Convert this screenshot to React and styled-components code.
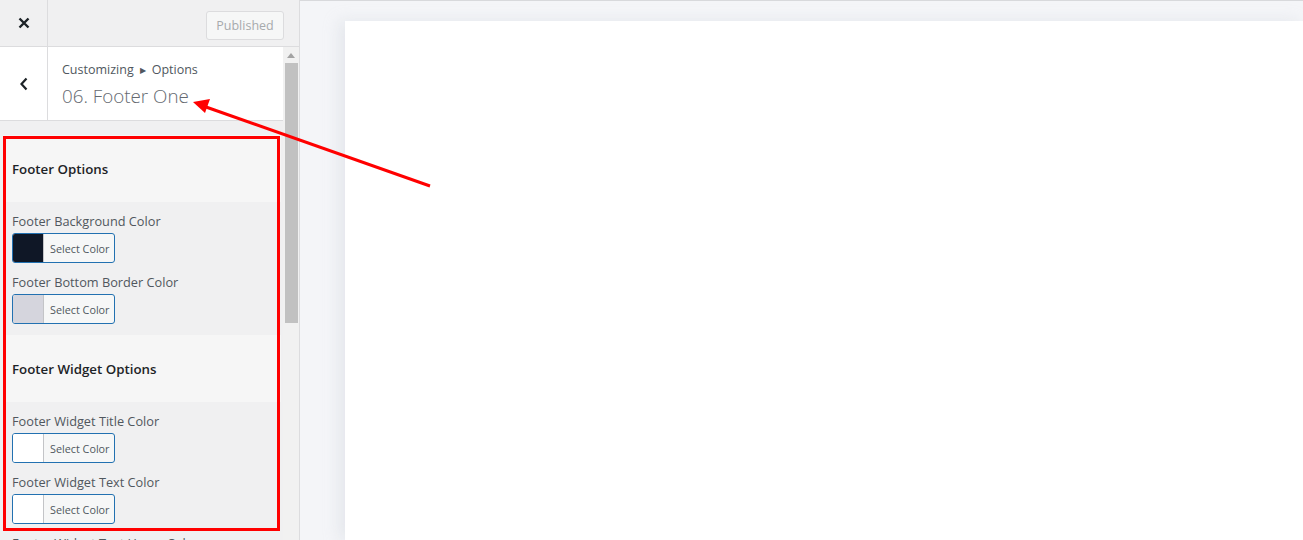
import React from "react";
import styled, { createGlobalStyle } from "styled-components";

const GlobalStyle = createGlobalStyle`
  html, body { margin: 0; padding: 0; overflow: hidden; }
  body { font-family: "Open Sans", "Noto Sans", sans-serif; color: #1d2327; }
  * { box-sizing: border-box; }
`;

const Page = styled.div`
  position: relative;
  display: flex;
  width: 1303px;
  height: 540px;
  overflow: hidden;
`;

const Sidebar = styled.aside`
  width: 300px;
  flex: none;
  display: flex;
  flex-direction: column;
  background: #f0f0f1;
  border-right: 1px solid #dcdcde;
`;

const TopBar = styled.div`
  height: 47px;
  flex: none;
  display: flex;
  align-items: center;
  border-bottom: 1px solid #dcdcde;
`;

const IconButton = styled.div`
  width: 48px;
  height: 100%;
  flex: none;
  display: flex;
  align-items: center;
  justify-content: center;
  border-right: 1px solid #dcdcde;
  color: #1d2327;
`;

const PublishedButton = styled.div`
  margin-left: auto;
  margin-right: 15px;
  margin-top: 4px;
  width: 78px;
  height: 29px;
  display: flex;
  align-items: center;
  justify-content: center;
  font-size: 12.5px;
  color: #a7aaad;
  background: #f6f7f7;
  border: 1px solid #dcdcde;
  border-radius: 3px;
`;

const Body = styled.div`
  flex: 1;
  display: flex;
  min-height: 0;
`;

const Content = styled.div`
  flex: 1;
  min-width: 0;
  overflow: hidden;
`;

const SectionHead = styled.div`
  height: 74px;
  display: flex;
  background: #fff;
  border-bottom: 1px solid #dcdcde;
`;

const Titles = styled.div`
  padding: 14px 0 0 14px;
  display: flex;
  flex-direction: column;
`;

const Crumb = styled.div`
  font-size: 12.5px;
  line-height: 18px;
  color: #50575e;
  display: flex;
  align-items: center;
  gap: 6px;
`;

const Caret = styled.span`
  font-size: 8px;
  color: #50575e;
`;

const SectionTitle = styled.div`
  margin-top: 5px;
  font-size: 18.8px;
  font-weight: 300;
  line-height: 24px;
  color: #646970;
`;

const List = styled.div`
  padding-top: 14px;
`;

const GroupHeader = styled.div`
  height: 67px;
  margin: 0 2px 0 3px;
  padding-left: 9px;
  display: flex;
  align-items: center;
  background: #f6f6f6;
  font-size: 13.3px;
  font-weight: 600;
  color: #1d2327;
`;

const Controls = styled.div`
  padding: 10px 12px 11px;
  display: flex;
  flex-direction: column;
  gap: 10px;
`;

const Control = styled.div`
  display: flex;
  flex-direction: column;
  gap: 2px;
`;

const Label = styled.div`
  font-size: 12.75px;
  line-height: 19px;
  font-weight: 500;
  color: #50575e;
`;

const ColorButton = styled.div`
  width: 103px;
  height: 30px;
  display: flex;
  border: 1px solid #2271b1;
  border-radius: 3px;
  overflow: hidden;
  background: #f6f7f7;
`;

const Swatch = styled.div`
  width: 31px;
  flex: none;
  background: ${(p) => p.$color};
  border-right: 1px solid #c3c4c7;
`;

const ColorText = styled.div`
  flex: 1;
  display: flex;
  align-items: center;
  padding-left: 6px;
  font-size: 10.8px;
  color: #50575e;
`;

const Scrollbar = styled.div`
  width: 16px;
  flex: none;
  display: flex;
  flex-direction: column;
  align-items: center;
  background: #f1f1f1;
`;

const ScrollArrow = styled.div`
  height: 16px;
  flex: none;
  display: flex;
  align-items: center;
  justify-content: center;
`;

const ScrollThumb = styled.div`
  width: 13px;
  height: 260px;
  background: #c1c1c1;
`;

const Preview = styled.main`
  flex: 1;
  background: #f4f5f8;
  border-top: 1px solid #d8d9dc;
  padding: 20px 0 0 45px;
  display: flex;
`;

const Frame = styled.div`
  flex: 1;
  background: #fff;
  box-shadow: -6px 0 14px rgba(200, 205, 215, 0.35);
`;

const Highlight = styled.div`
  position: absolute;
  left: 3px;
  top: 136px;
  width: 277px;
  height: 395px;
  border: 3px solid #ff0000;
  pointer-events: none;
`;

const ArrowSvg = styled.svg`
  position: absolute;
  left: 0;
  top: 0;
  pointer-events: none;
`;

const groups = [
  {
    title: "Footer Options",
    items: [
      { label: "Footer Background Color", color: "#0f1726" },
      { label: "Footer Bottom Border Color", color: "#d5d5dd" },
    ],
  },
  {
    title: "Footer Widget Options",
    items: [
      { label: "Footer Widget Title Color", color: "#ffffff" },
      { label: "Footer Widget Text Color", color: "#ffffff" },
      { label: "Footer Widget Text Hover Color", color: "#ffffff" },
    ],
  },
];

export default function App() {
  return (
    <>
      <GlobalStyle />
      <Page>
        <Sidebar>
          <TopBar>
            <IconButton>
              <svg width="12" height="12" viewBox="0 0 12 12">
                <path d="M1.5 1.5 L10.5 10.5 M10.5 1.5 L1.5 10.5" stroke="#1d2327" strokeWidth="2.4" />
              </svg>
            </IconButton>
            <PublishedButton>Published</PublishedButton>
          </TopBar>
          <Body>
            <Content>
              <SectionHead>
                <IconButton>
                  <svg width="10" height="14" viewBox="0 0 10 14">
                    <path d="M7.5 1.5 L2.5 7 L7.5 12.5" fill="none" stroke="#1d2327" strokeWidth="2.2" />
                  </svg>
                </IconButton>
                <Titles>
                  <Crumb>
                    Customizing <Caret>▶</Caret> Options
                  </Crumb>
                  <SectionTitle>06. Footer One</SectionTitle>
                </Titles>
              </SectionHead>
              <List>
                {groups.map((g) => (
                  <React.Fragment key={g.title}>
                    <GroupHeader>{g.title}</GroupHeader>
                    <Controls>
                      {g.items.map((it) => (
                        <Control key={it.label}>
                          <Label>{it.label}</Label>
                          <ColorButton>
                            <Swatch $color={it.color} />
                            <ColorText>Select Color</ColorText>
                          </ColorButton>
                        </Control>
                      ))}
                    </Controls>
                  </React.Fragment>
                ))}
              </List>
            </Content>
            <Scrollbar>
              <ScrollArrow>
                <svg width="8" height="5" viewBox="0 0 8 5">
                  <path d="M0 5 L4 0 L8 5 Z" fill="#a3a3a3" />
                </svg>
              </ScrollArrow>
              <ScrollThumb />
            </Scrollbar>
          </Body>
        </Sidebar>
        <Preview>
          <Frame />
        </Preview>
        <Highlight />
        <ArrowSvg width="1303" height="540" viewBox="0 0 1303 540">
          <line x1="430" y1="186" x2="206" y2="107" stroke="#ff0000" strokeWidth="3" />
          <path d="M193 102 L210 99 L205 113 Z" fill="#ff0000" />
        </ArrowSvg>
      </Page>
    </>
  );
}
